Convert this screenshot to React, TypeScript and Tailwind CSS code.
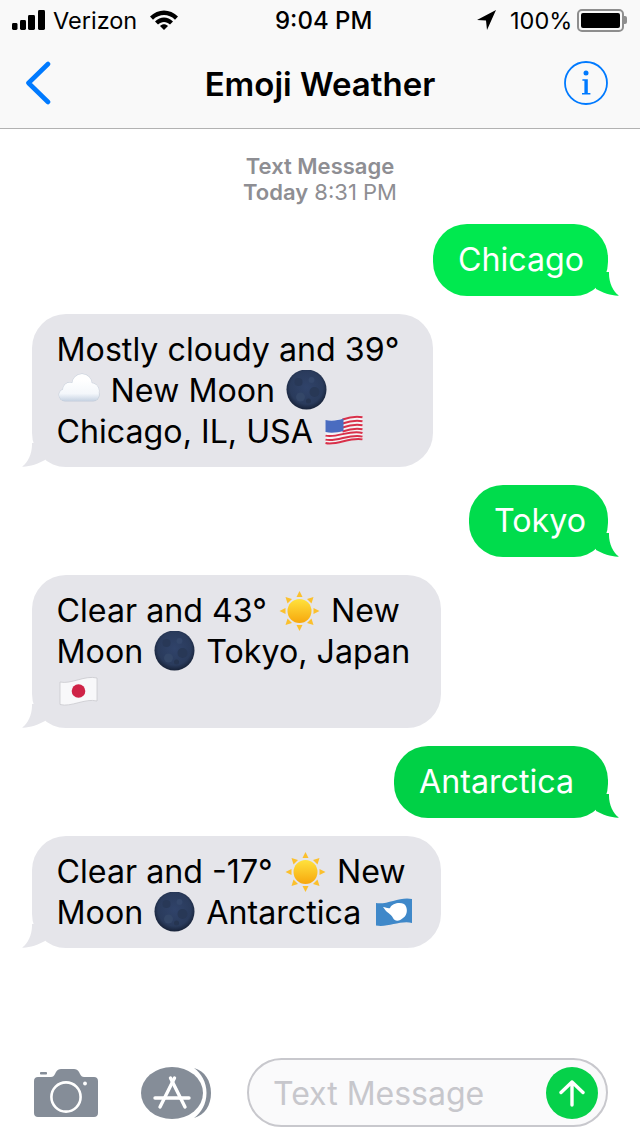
import React from "react";

const font = "[font-family:Inter,'Noto_Sans',sans-serif]";

const Moon = () => (
  <svg viewBox="-0.5 0 45 41" className="inline-block w-[45px] h-[41px] align-top">
    <defs>
      <radialGradient id="moonFill" cx="50%" cy="45%" r="55%">
        <stop offset="0%" stopColor="#30436a" />
        <stop offset="75%" stopColor="#2a3b5c" />
        <stop offset="100%" stopColor="#172238" />
      </radialGradient>
    </defs>
    <circle cx="22" cy="19.5" r="20" fill="url(#moonFill)" />
    <circle cx="14" cy="12" r="4" fill="#283857" />
    <circle cx="27" cy="10" r="3" fill="#34476b" />
    <circle cx="30" cy="22" r="5" fill="#283856" />
    <circle cx="16" cy="27" r="4.5" fill="#344768" />
    <circle cx="24" cy="31" r="2.5" fill="#263551" />
  </svg>
);

const Sun = () => (
  <svg viewBox="-1.5 0 46 41" className="inline-block w-[46px] h-[41px] align-top">
    <defs>
      <linearGradient id="sunFill" x1="0" y1="0" x2="0" y2="1">
        <stop offset="0%" stopColor="#ffe23d" />
        <stop offset="100%" stopColor="#f7a70d" />
      </linearGradient>
    </defs>
    <g fill="#fbc02d">
      <path d="M22 1 L25 7 H19 Z" />
      <path d="M22 41 L25 35 H19 Z" />
      <path d="M2 21 L8 18 V24 Z" />
      <path d="M42 21 L36 18 V24 Z" />
      <path d="M8 7 L14.5 9 L10 13.5 Z" />
      <path d="M36 7 L29.5 9 L34 13.5 Z" />
      <path d="M8 35 L14.5 33 L10 28.5 Z" />
      <path d="M36 35 L29.5 33 L34 28.5 Z" />
    </g>
    <circle cx="22" cy="21" r="12" fill="url(#sunFill)" />
  </svg>
);

const Cloud = () => (
  <svg viewBox="0 0 45 41" className="inline-block w-[45px] h-[41px] align-top">
    <defs>
      <linearGradient id="cloudFill" gradientUnits="userSpaceOnUse" x1="0" y1="10" x2="0" y2="31">
        <stop offset="0%" stopColor="#ffffff" />
        <stop offset="65%" stopColor="#f4f7fb" />
        <stop offset="100%" stopColor="#c6d2e2" />
      </linearGradient>
    </defs>
    <g fill="#c3ccd9">
      <circle cx="25" cy="14" r="10.4" />
      <circle cx="13" cy="19.5" r="7.4" />
      <circle cx="34" cy="21" r="8.4" />
      <rect x="1.6" y="18.6" width="41" height="12.8" rx="6.4" />
    </g>
    <g fill="url(#cloudFill)">
      <circle cx="25" cy="14" r="10" />
      <circle cx="13" cy="19.5" r="7" />
      <circle cx="34" cy="21" r="8" />
      <rect x="2" y="19" width="40" height="12" rx="6" />
    </g>
  </svg>
);

const UsFlag = () => (
  <svg viewBox="-0.5 0 45 41" className="inline-block w-[45px] h-[41px] align-top">
    <path d="M3 9 C14 12 28 2 40 5 V29 C28 26 14 36 3 33 Z" fill="#f4f4f6" />
    <g fill="none" stroke="#d8304a" strokeWidth="2">
      <path d="M20 8.5 C27 6 34 5 40 6.2" />
      <path d="M20 12.5 C27 10 34 9 40 10.2" />
      <path d="M20 16.5 C27 14 34 13 40 14.2" />
      <path d="M20 20.5 C27 18 34 17 40 18.2" />
      <path d="M3 24.6 C14 27.5 28 18 40 22" />
      <path d="M3 28.6 C14 31.5 28 22 40 25.6" />
      <path d="M3 32 C14 35 28 25.5 40 28.4" />
    </g>
    <path d="M3 9 C9 10.5 15 9.5 21 7.5 V20 C15 21.5 9 22.5 3 21 Z" fill="#4a6cc0" />
  </svg>
);

const JapanFlag = () => (
  <svg viewBox="0 0 44 41" className="inline-block w-[44px] h-[41px] align-top">
    <path
      d="M3 10 C14 12.5 28 3 40 6 V29 C28 26 14 35.5 3 32.5 Z"
      fill="#f8f8fa"
      stroke="#c9c9ce"
      strokeWidth="0.8"
    />
    <circle cx="21.5" cy="19" r="6.8" fill="#cf2347" />
  </svg>
);

const AntarcticaFlag = () => (
  <svg viewBox="0 0 44 41" className="ml-[3px] inline-block w-[44px] h-[41px] align-top">
    <path d="M3 11 C14 13 28 4 39 7 V31 C28 28 14 36 3 33.5 Z" fill="#3f88c9" />
    <path
      d="M10 15 C13 15 15 17 17 16 C19 11 27 10 31 12 C35 15 35 23 30 26 C27 29 22 30 20 26 C19 23 15 21 13 19 Z"
      fill="#ffffff"
    />
  </svg>
);

const Tail = ({ side, color }: { side: "left" | "right"; color: string }) => (
  <svg
    viewBox="0 0 23 24"
    className={`absolute bottom-0 w-[23px] h-[24px] ${color} ${
      side === "left" ? "-left-[10px]" : "-right-[11px] -scale-x-100"
    }`}
  >
    <path d="M10 0 V2 C10 10 6 20 0 23.6 C7 24 16 21 23 17 V0 Z" fill="currentColor" />
  </svg>
);

const Sent = ({ text, width, bg, fg }: { text: string; width: string; bg: string; fg: string }) => (
  <div className={`relative self-end mr-[32px] h-[72px] rounded-[34px] pl-[25px] flex items-center text-white ${width} ${bg}`}>
    <div className="leading-[41px] mb-[2px]">{text}</div>
    <Tail side="right" color={fg} />
  </div>
);

const Received = ({ lines, width }: { lines: React.ReactNode[]; width: string }) => (
  <div className={`relative self-start ml-[32px] rounded-[34px] bg-[#e5e5ea] pl-[24.5px] py-[15px] text-black ${width}`}>
    {lines.map((line, i) => (
      <div key={i} className="leading-[41px] h-[41px] whitespace-pre">
        {line}
      </div>
    ))}
    <Tail side="left" color="text-[#e5e5ea]" />
  </div>
);

const StatusBar = () => (
  <div className="h-[40px] flex items-center relative text-black">
    <svg viewBox="0 0 33 20" className="ml-[12px] w-[33px] h-[20px]">
      <rect x="0" y="13" width="5.5" height="7" rx="1.4" />
      <rect x="8" y="10" width="6" height="10" rx="1.4" />
      <rect x="16" y="5" width="7" height="15" rx="1.4" />
      <rect x="26" y="0" width="7" height="20" rx="1.4" />
    </svg>
    <span className="ml-[8px] mt-[2px] text-[23.5px] leading-[30px]">Verizon</span>
    <svg viewBox="0 0 28 20" className="ml-[13px] w-[28px] h-[20px]">
      <path d="M0 6.5 C8 -1.5 20 -1.5 28 6.5 L25 9.7 C18.5 3.5 9.5 3.5 3 9.7 Z" />
      <path d="M5 11.5 C10.5 6 17.5 6 23 11.5 L20 14.5 C16.5 11 11.5 11 8 14.5 Z" />
      <path d="M10 16 C12.5 13.5 15.5 13.5 18 16 L14 20 Z" />
    </svg>
    <span className="absolute left-[275px] top-[6px] text-[24px] leading-[30px] font-medium">9:04 PM</span>
    <svg viewBox="0 0 19 20" className="absolute left-[477px] w-[19px] h-[20px]">
      <path d="M19 0 L0 10 L9 10.5 L10 20 Z" />
    </svg>
    <span className="absolute left-[510px] top-[6px] text-[23.5px] leading-[30px]">100%</span>
    <div className="absolute left-[577px] flex items-center">
      <div className="w-[47px] h-[23px] rounded-[5px] border-2 border-[#8e8e8e] p-[2px]">
        <div className="w-full h-full rounded-[2px] bg-black" />
      </div>
      <div className="w-[3px] h-[8px] rounded-r-[2px] bg-[#8e8e8e]" />
    </div>
  </div>
);

const NavBar = () => (
  <div className="h-[89px] flex items-center justify-between relative border-b border-[#b2b2b2]">
    <svg viewBox="0 0 26 44" className="ml-[25px] mb-[2px] w-[26px] h-[44px]" fill="none" stroke="#007aff" strokeWidth="4.6" strokeLinecap="round" strokeLinejoin="round">
      <path d="M23 3 L3.5 22 L23 41" />
    </svg>
    <div className="absolute left-0 right-0 text-center text-[33px] leading-[40px] font-semibold text-black">
      Emoji Weather
    </div>
    <svg viewBox="0 0 44 44" className="mr-[32px] mb-[2px] w-[44px] h-[44px]">
      <circle cx="22" cy="22" r="21" fill="none" stroke="#007aff" strokeWidth="1.8" />
      <circle cx="22" cy="12" r="2.5" fill="#007aff" />
      <path d="M18.4 18.2 H23.8 V32 H26.4 V33.6 H18 V32 H20.4 V19.8 H18.4 Z" fill="#007aff" />
    </svg>
  </div>
);

const InputBar = () => (
  <div className="mt-auto pb-[9px] flex items-center">
    <svg viewBox="0 0 64 48" className="ml-[34px] w-[64px] h-[48px]">
      <path
        d="M4 8 H17 C19 8 20 7 21 5 L22 3 C23 1 25 0 27 0 H40 C42 0 44 1 45 3 L46 5 C47 7 48 8 50 8 H60 C62.5 8 64 9.5 64 12 V44 C64 46.5 62.5 48 60 48 H4 C1.5 48 0 46.5 0 44 V12 C0 9.5 1.5 8 4 8 Z"
        fill="#858d98"
      />
      <rect x="6" y="3" width="7" height="2.6" rx="0.8" fill="#858d98" />
      <circle cx="32" cy="28" r="14.6" fill="none" stroke="#ffffff" strokeWidth="2.6" />
      <circle cx="51" cy="14.5" r="1.9" fill="#ffffff" />
    </svg>
    <svg viewBox="0 0 70 52" className="ml-[43px] w-[70px] h-[52px]">
      <path d="M53 1 C64 4 70 14 70 26 C70 38 64 48 53 51 C60 46 65.5 37 65.5 26 C65.5 15 60 6 53 1 Z" fill="#858d98" />
      <ellipse cx="31" cy="26" rx="31" ry="26" fill="#858d98" />
      <g fill="none" stroke="#ffffff" strokeWidth="3.4" strokeLinecap="round">
        <path d="M29.5 11 L44 40" />
        <path d="M33.5 11 L19 40" />
        <path d="M14 31 H48" />
      </g>
    </svg>
    <div className="ml-[36px] w-[361px] h-[69px] rounded-[35px] border-2 border-[#c8c8cd] bg-[#fafafb] flex items-center justify-between pl-[24px] pr-[8px]">
      <span className="mt-[2px] text-[32px] leading-[40px] text-[#c7c7cc]">Text Message</span>
      <div className="w-[52px] h-[52px] rounded-full bg-[#06d14a] flex items-center justify-center">
        <svg viewBox="0 0 26 28" className="w-[26px] h-[28px]" fill="none" stroke="#ffffff" strokeWidth="3.4" strokeLinecap="round" strokeLinejoin="round">
          <path d="M13 26 V3 L2 13.5 M13 3 L24 13.5" />
        </svg>
      </div>
    </div>
  </div>
);

export default function App() {
  return (
    <div className={`w-[640px] h-[1136px] bg-white flex flex-col overflow-hidden text-[32.2px] ${font}`}>
      <div className="bg-[#f9f9f9]">
        <StatusBar />
        <NavBar />
      </div>

      <div className="mt-[24px] text-center text-[#8e8e93] text-[22px] leading-[26px]">
        <div className="font-semibold">Text Message</div>
        <div>
          <span className="font-semibold">Today</span> 8:31 PM
        </div>
      </div>

      <div className="mt-[19px] flex flex-col gap-[18px]">
        <Sent text="Chicago" width="w-[175px]" bg="bg-[#00e94f]" fg="text-[#00e94f]" />
        <Received
          width="w-[401px]"
          lines={[
            "Mostly cloudy and 39°",
            <>
              <Cloud /> New Moon <Moon />
            </>,
            <>
              Chicago, IL, USA <UsFlag />
            </>,
          ]}
        />
        <Sent text="Tokyo" width="w-[139px]" bg="bg-[#00dc4c]" fg="text-[#00dc4c]" />
        <Received
          width="w-[409px]"
          lines={[
            <>
              Clear and 43° <Sun /> New
            </>,
            <>
              Moon <Moon /> Tokyo, Japan
            </>,
            <JapanFlag />,
          ]}
        />
        <Sent text="Antarctica" width="w-[214px]" bg="bg-[#00d146]" fg="text-[#00d146]" />
        <Received
          width="w-[409px]"
          lines={[
            <>
              Clear and -17° <Sun /> New
            </>,
            <>
              Moon <Moon /> Antarctica <AntarcticaFlag />
            </>,
          ]}
        />
      </div>

      <InputBar />
    </div>
  );
}
